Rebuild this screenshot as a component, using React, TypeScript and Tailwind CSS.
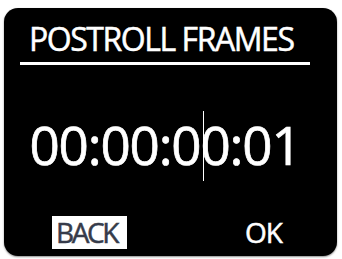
import React from 'react';

const FONT = { fontFamily: '"Open Sans", "Noto Sans", sans-serif' };

export default function App() {
  return (
    <div className="w-[342px] h-[259px] bg-white pt-[8px] pl-[4px]" style={FONT}>
      <div className="w-[333px] h-[248px] bg-black rounded-[14px] flex flex-col shadow-[0_1px_2px_rgba(0,0,0,0.45)]">
        {/* Title */}
        <div className="pt-[14.5px] pl-[25px] text-white text-[32px] leading-[32px] tracking-[-1.45px] whitespace-nowrap [-webkit-text-stroke:0.5px_#fff]">
          POSTROLL FRAMES
        </div>
        <div className="mt-[7.5px] ml-[16px] w-[290px] h-[3px] bg-white" />

        {/* Timecode */}
        <div className="mt-[53px] pl-[25.5px] text-white text-[53px] leading-[53px] tracking-[-1.2px] whitespace-nowrap [-webkit-text-stroke:0.7px_#fff]">
          00:00:0
          <span className="relative inline-block w-0 h-[53px] align-top">
            <span className="absolute left-[3px] top-[-7px] w-px h-[70px] bg-white" />
          </span>
          0:01
        </div>

        {/* Soft keys */}
        <div className="mt-[45px] flex items-start">
          <div className="ml-[48px] w-[75px] h-[33px] bg-white text-[#363b4a] text-[28px] leading-[33px] tracking-[-2.4px] pl-[4px] whitespace-nowrap [-webkit-text-stroke:0.5px_#363b4a]">
            BACK
          </div>
          <div className="ml-[118px] text-white text-[28px] leading-[33px] tracking-[-1px] [-webkit-text-stroke:0.5px_#fff]">OK</div>
        </div>
      </div>
    </div>
  );
}
